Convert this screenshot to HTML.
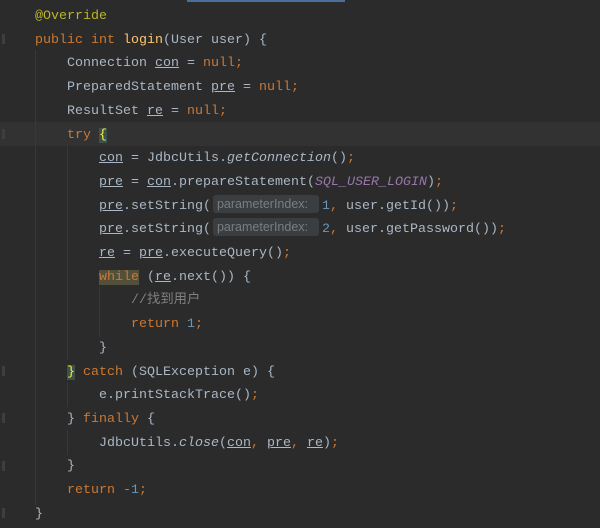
<!DOCTYPE html>
<html><head><style>
html,body{margin:0;padding:0}
body{width:600px;height:528px;background:#2b2b2b;position:relative;overflow:hidden;font-family:"Liberation Mono",monospace;font-size:13.33px;color:#a9b7c6}
.l{position:absolute;left:0;height:23.7px;line-height:23.7px;white-space:pre;margin-top:2px}
.k{color:#cc7832}.a{color:#bbb529}.m{color:#ffc66d}.c{color:#9876aa;font-style:italic}.n{color:#6897bb}.cm{color:#808080}.i{font-style:italic}
.u{text-decoration:underline;text-decoration-color:#a9b7c6}
.h{display:inline-block;background:#3b3e40;color:#7a7e80;font-family:"Liberation Sans",sans-serif;font-size:12.5px;line-height:18px;width:106px;margin:0 3px 0 2px;padding-left:4px;box-sizing:border-box;border-radius:3px;vertical-align:1px}
.g{position:absolute;width:1px;background:#383838}
.f{position:absolute;left:2px;width:3px;height:10px;background:#3e3e3e}
</style></head><body>
<div style="position:absolute;left:187px;top:0;width:158px;height:2px;background:#4a6f9a"></div>
<div style="position:absolute;left:0;top:122px;width:600px;height:24px;background:#323232"></div>
<div class="g" style="left:35px;top:50px;height:455px"></div>
<div class="g" style="left:67px;top:145px;height:215px"></div>
<div class="g" style="left:67px;top:382px;height:25px"></div>
<div class="g" style="left:67px;top:430px;height:25px"></div>
<div class="g" style="left:99px;top:287px;height:50px"></div>
<div class="f" style="top:34px"></div><div class="f" style="top:129px"></div><div class="f" style="top:366px"></div><div class="f" style="top:413px"></div><div class="f" style="top:461px"></div><div class="f" style="top:508px"></div>
<div class="l" style="top:3px;left:35px"><span class="a">@Override</span></div>
<div class="l" style="top:26.7px;left:35px"><span class="k">public int </span><span class="m">login</span>(User user) {</div>
<div class="l" style="top:50.4px;left:67px">Connection <span class="u">con</span> = <span class="k">null;</span></div>
<div class="l" style="top:74.1px;left:67px">PreparedStatement <span class="u">pre</span> = <span class="k">null;</span></div>
<div class="l" style="top:97.8px;left:67px">ResultSet <span class="u">re</span> = <span class="k">null;</span></div>
<div class="l" style="top:121.5px;left:67px"><span class="k">try </span><span style="background:#3b514d;color:#ffef28">{</span></div>
<div class="l" style="top:145.2px;left:99px"><span class="u">con</span> = JdbcUtils.<span class="i">getConnection</span>()<span class="k">;</span></div>
<div class="l" style="top:168.9px;left:99px"><span class="u">pre</span> = <span class="u">con</span>.prepareStatement(<span class="c">SQL_USER_LOGIN</span>)<span class="k">;</span></div>
<div class="l" style="top:192.6px;left:99px"><span class="u">pre</span>.setString(<span class="h">parameterIndex:</span><span class="n">1</span><span class="k">, </span>user.getId())<span class="k">;</span></div>
<div class="l" style="top:216.3px;left:99px"><span class="u">pre</span>.setString(<span class="h">parameterIndex:</span><span class="n">2</span><span class="k">, </span>user.getPassword())<span class="k">;</span></div>
<div class="l" style="top:240px;left:99px"><span class="u">re</span> = <span class="u">pre</span>.executeQuery()<span class="k">;</span></div>
<div class="l" style="top:263.7px;left:99px"><span class="k" style="background:#52503a">while</span> (<span class="u">re</span>.next()) {</div>
<div class="l" style="top:287.4px;left:131px"><span class="cm" style="font-family:'Liberation Mono','Noto Sans CJK SC',monospace">//找到用户</span></div>
<div class="l" style="top:311.1px;left:131px"><span class="k">return </span><span class="n">1</span><span class="k">;</span></div>
<div class="l" style="top:334.8px;left:99px">}</div>
<div class="l" style="top:358.5px;left:67px"><span style="background:#3b514d;color:#ffef28">}</span> <span class="k">catch </span>(SQLException e) {</div>
<div class="l" style="top:382.2px;left:99px">e.printStackTrace()<span class="k">;</span></div>
<div class="l" style="top:405.9px;left:67px">} <span class="k">finally </span>{</div>
<div class="l" style="top:429.6px;left:99px">JdbcUtils.<span class="i">close</span>(<span class="u">con</span><span class="k">, </span><span class="u">pre</span><span class="k">, </span><span class="u">re</span>)<span class="k">;</span></div>
<div class="l" style="top:453.3px;left:67px">}</div>
<div class="l" style="top:477px;left:67px"><span class="k">return </span><span class="n">-1</span><span class="k">;</span></div>
<div class="l" style="top:500.7px;left:35px">}</div>
</body></html>
